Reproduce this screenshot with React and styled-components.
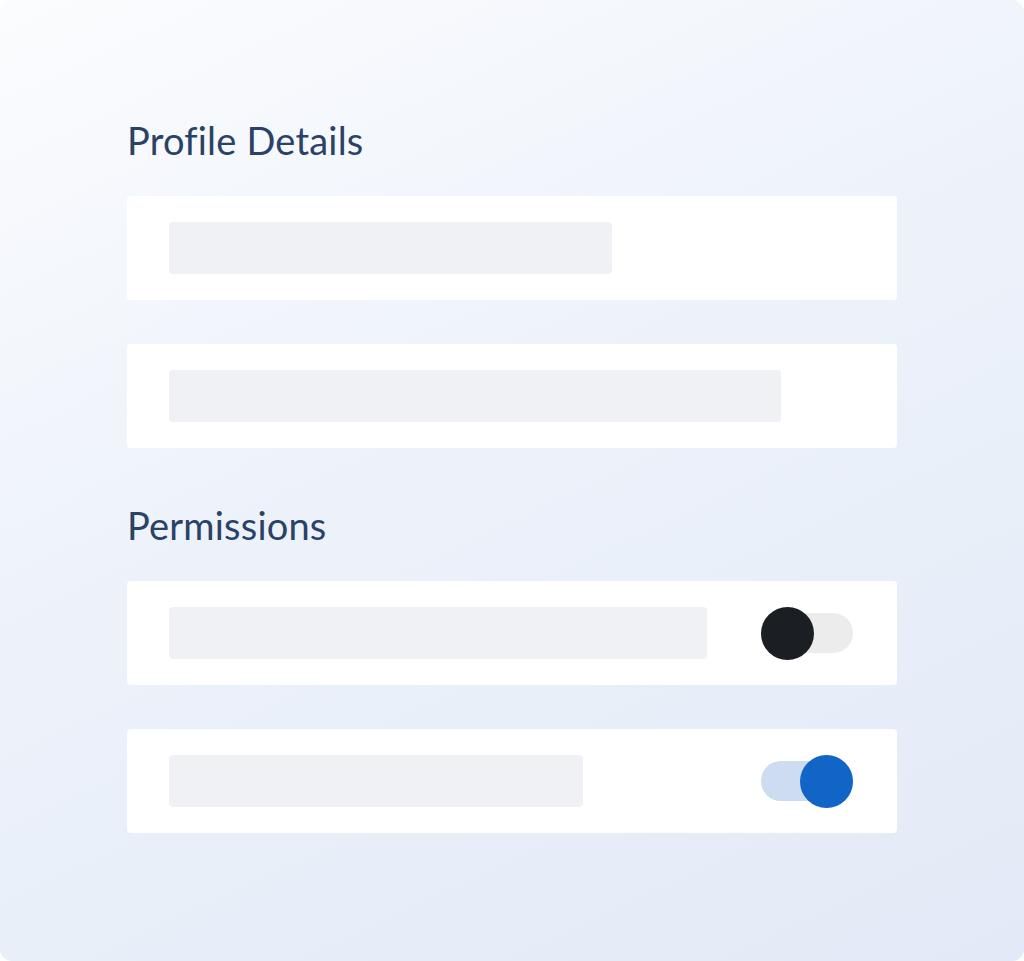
import React from "react";
import styled, { createGlobalStyle } from "styled-components";

const GlobalStyle = createGlobalStyle`
  html, body {
    margin: 0;
    padding: 0;
    background: #fff;
  }
  * {
    box-sizing: border-box;
  }
`;

const sections = [
  {
    title: "Profile Details",
    rows: [{ bar: 443 }, { bar: 612 }]
  },
  {
    title: "Permissions",
    rows: [
      { bar: 538, toggle: "off" },
      { bar: 414, toggle: "on" }
    ]
  }
];

const App = () => {
  return (
    <>
      <GlobalStyle />
      <Page>
        <Content>
          {sections.map((section) => (
            <Section key={section.title}>
              <SectionTitle>{section.title}</SectionTitle>
              <RowList>
                {section.rows.map((row, i) => (
                  <Row key={i}>
                    <Placeholder style={{ width: row.bar }} />
                    {row.toggle && (
                      <Toggle $on={row.toggle === "on"}>
                        <Knob $on={row.toggle === "on"} />
                      </Toggle>
                    )}
                  </Row>
                ))}
              </RowList>
            </Section>
          ))}
        </Content>
      </Page>
    </>
  );
};

const Page = styled.div`
  width: 1024px;
  height: 961px;
  border-radius: 12px;
  overflow: hidden;
  background: linear-gradient(155deg, #fbfcfe 0%, #edf2fa 45%, #e2eaf7 100%);
  padding: 112px 127px 0;
  font-family: "Lato", "Noto Sans", sans-serif;
`;

const Content = styled.div`
  width: 770px;
  display: flex;
  flex-direction: column;
  gap: 49px;
`;

const Section = styled.section`
  display: flex;
  flex-direction: column;
`;

const SectionTitle = styled.h2`
  margin: 0 0 28px;
  font-size: 38px;
  font-weight: 400;
  line-height: 56px;
  color: #2a4266;
  letter-spacing: 0.2px;
`;

const RowList = styled.div`
  display: flex;
  flex-direction: column;
  gap: 44px;
`;

const Row = styled.div`
  height: 104px;
  background: #fff;
  border-radius: 4px;
  display: flex;
  align-items: center;
  justify-content: space-between;
  padding: 0 44px 0 42px;
`;

const Placeholder = styled.div`
  height: 52px;
  border-radius: 4px;
  background: #f0f1f5;
`;

const Toggle = styled.div`
  position: relative;
  width: 92px;
  height: 40px;
  border-radius: 20px;
  background: ${(p) => (p.$on ? "#cddcf1" : "#ececec")};
`;

const Knob = styled.div`
  position: absolute;
  top: -6px;
  ${(p) => (p.$on ? "right: 0;" : "left: 0;")}
  width: 53px;
  height: 53px;
  border-radius: 50%;
  background: ${(p) => (p.$on ? "#1065c6" : "#1b1f24")};
`;

export default App;
